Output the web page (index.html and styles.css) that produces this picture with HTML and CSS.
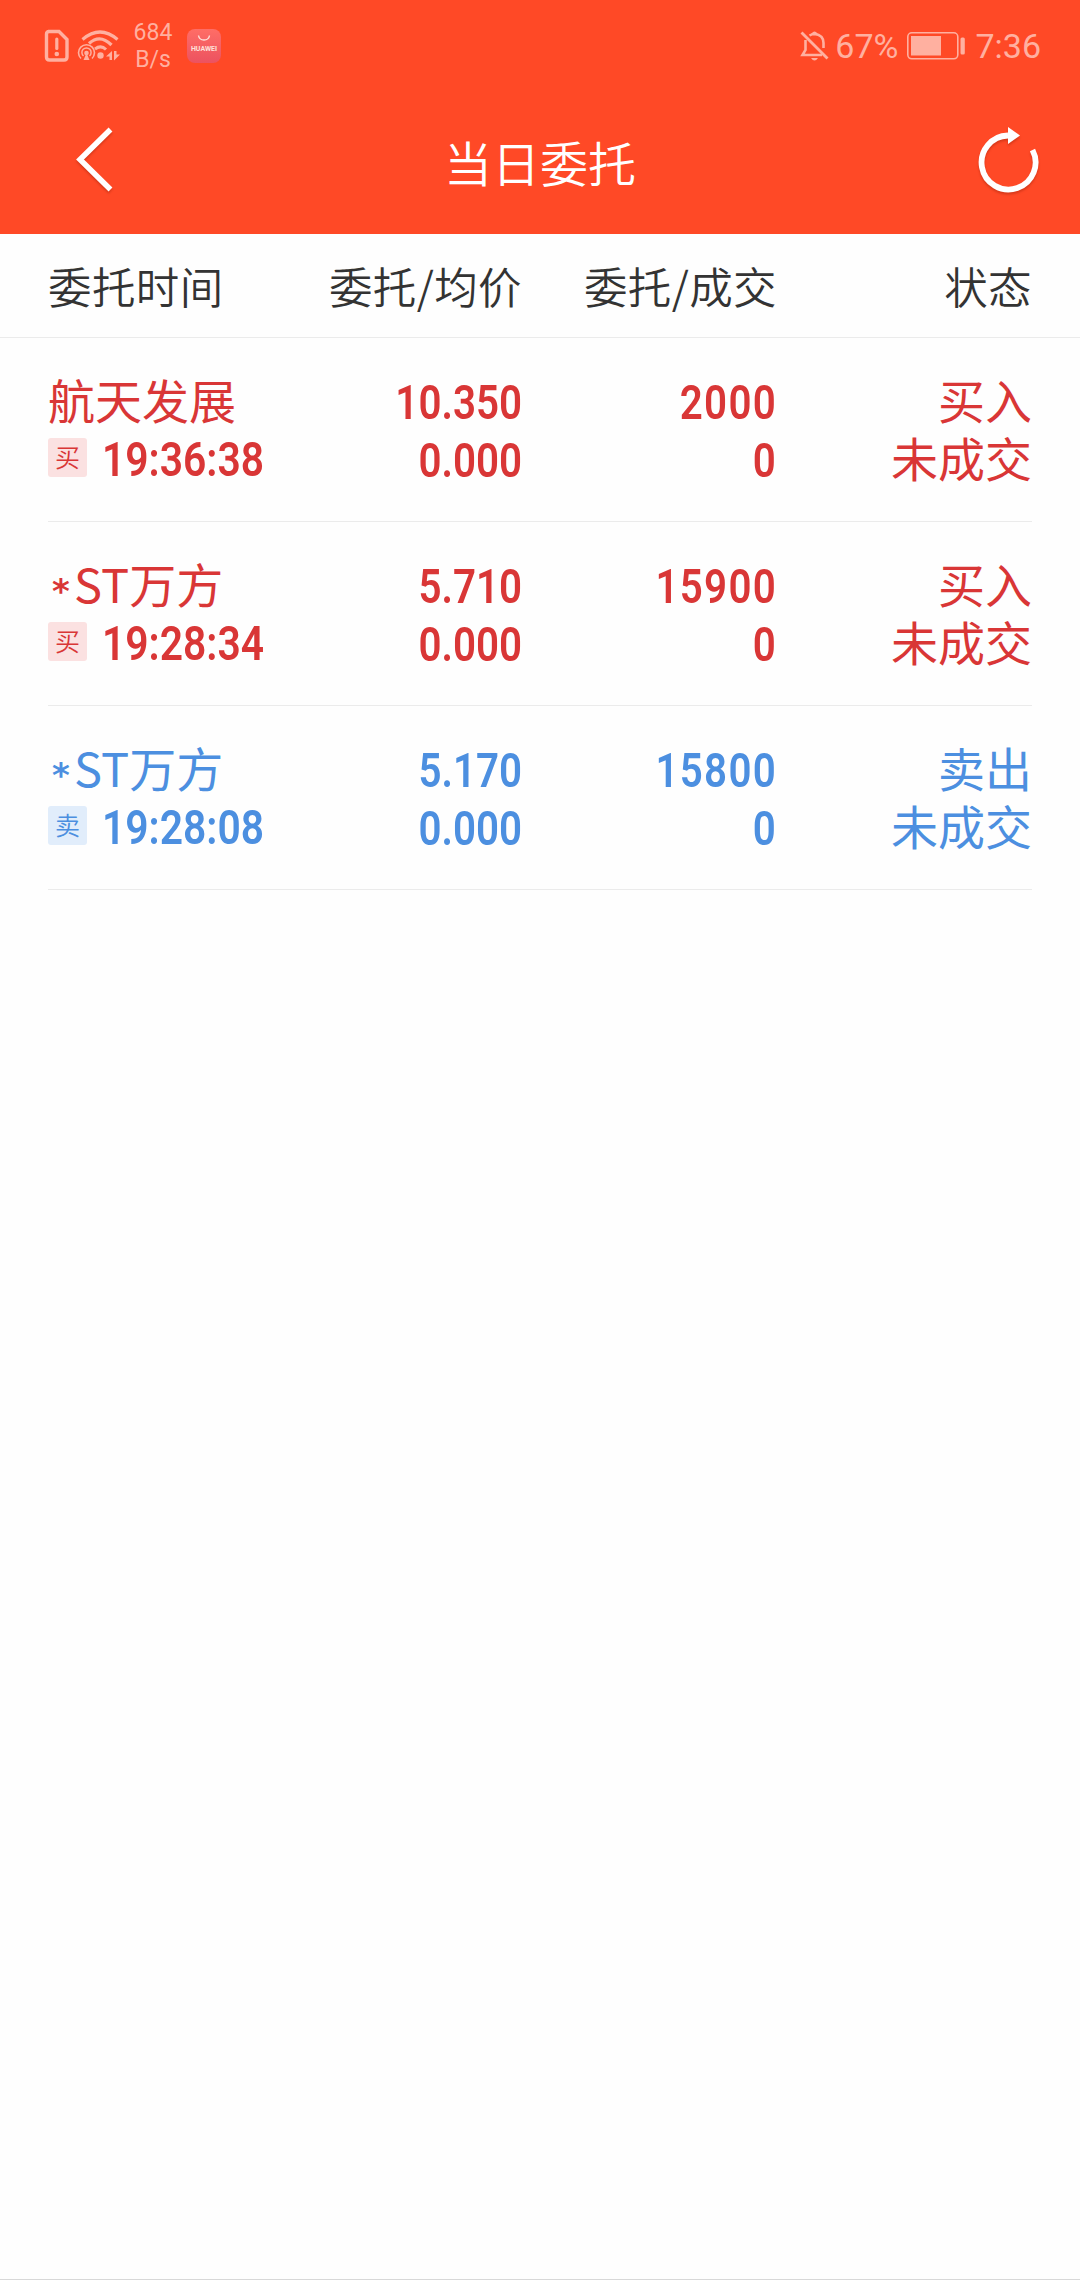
FILE: index.html
```
<!DOCTYPE html>
<html lang="zh-CN">
<head>
    <meta charset="UTF-8">
    <meta name="viewport" content="width=device-width, initial-scale=1.0">
    <title>当日委托</title>
    <link rel="stylesheet" href="styles.css">
</head>
<body>
    <header class="header">
        <div class="status-bar">
            <div class="status-left">
                <svg class="sim-icon" width="26" height="34" viewBox="0 0 26 34">
                    <path d="M4 2.5 H15 L23 10.5 V28 Q23 31 20 31 H5.500 Q2.500 31 2.500 28 V5 Q2.500 2.500 5 2.500 Z" fill="none" stroke="#ffb0a0" stroke-width="3.4"/>
                    <path d="M12.800 10 V19.500" stroke="#ffb0a0" stroke-width="3.200" stroke-linecap="round"/>
                    <circle cx="12.800" cy="25" r="2.300" fill="#ffb0a0"/>
                </svg>
                <svg class="wifi-icon" width="44" height="34" viewBox="0 0 44 34">
                    <g fill="none" stroke="#ffb0a0">
                        <path d="M5.500 10.500 Q23 -4.500 40.500 10.500" stroke-width="3.200"/>
                        <path d="M12 14.500 Q23 4.500 34.500 16" stroke-width="3.200"/>
                        <path d="M18 20 Q24 15.500 29 20.500" stroke-width="3"/>
                        <path d="M4 29.500 A8 8 0 1 1 15 29.500" stroke-width="1.600"/>
                        <path d="M6.500 27 A4.600 4.600 0 1 1 12.500 27" stroke-width="1.500"/>
                    </g>
                    <g fill="#ffb0a0">
                        <circle cx="9.500" cy="24" r="2.300"/>
                        <path d="M9.500 24 L12.500 31 H6.500 Z"/>
                        <circle cx="23.500" cy="26.500" r="3.200"/>
                        <path d="M29 27.500 L35 22 V31 H32.500 V27.500 Z"/>
                        <path d="M37 22 H39.500 V25.500 H43 L37 31.500 Z"/>
                    </g>
                </svg>
                <div class="speed">
                    <span>684</span>
                    <span>B/s</span>
                </div>
                <div class="app-icon">
                    <svg width="14" height="7" viewBox="0 0 14 7">
                        <path d="M1.500 0.500 C2.500 6.500 11.500 6.500 12.500 0.500" fill="none" stroke="#ffe0da" stroke-width="1.400"/>
                    </svg>
                    <span>HUAWEI</span>
                </div>
            </div>
            <div class="status-right">
                <svg class="bell-icon" width="29" height="32" viewBox="0 0 29 32">
                    <g fill="none" stroke="#ffb0a0" stroke-width="2.600">
                        <path d="M5.500 10 V20 L2.500 25 H22"/>
                        <path d="M9.500 5.500 Q12 4 14.500 4 Q23.500 5 23.500 13 V18"/>
                        <path d="M1.500 2.500 L27.500 28.500" stroke-width="2.800"/>
                    </g>
                    <path d="M11.500 5 V3.500 Q14.500 -0.500 17.500 3.500 V5 Z" fill="#ffb0a0"/>
                    <path d="M11 28 H18 Q14.500 33 11 28 Z" fill="#ffb0a0"/>
                </svg>
                <span class="percent">67%</span>
                <svg class="battery-icon" width="60" height="28" viewBox="0 0 60 28">
                    <rect x="0.800" y="0.800" width="50" height="26" rx="4" fill="none" stroke="#ffb0a0" stroke-width="1.600"/>
                    <rect x="4" y="4" width="30" height="19.500" fill="#ffb0a0"/>
                    <rect x="53.500" y="5.500" width="4.300" height="17" rx="1.500" fill="#ffb0a0"/>
                </svg>
                <span class="clock">7:36</span>
            </div>
        </div>
        <nav class="nav">
            <svg class="nav-icon" width="80" height="80" viewBox="0 0 80 80">
                <path d="M62.500 10.500 L32 40.500 L62.500 70.500" fill="none" stroke="#fff" stroke-width="5.500"/>
            </svg>
            <h1>当日委托</h1>
            <svg class="nav-icon" width="80" height="80" viewBox="0 0 80 80">
                <path d="M48 16.500 A27 27 0 1 0 72.500 31" fill="none" stroke="#fff" stroke-width="5.800"/>
                <path d="M48 8 L60 16.500 L48 25 Z" fill="#fff"/>
            </svg>
        </nav>
    </header>

    <div class="table-head">
        <span>委托时间</span>
        <span>委托/均价</span>
        <span>委托/成交</span>
        <span>状态</span>
    </div>

    <main class="orders">
        <div class="order buy">
            <div class="cell">
                <div class="name">航天发展</div>
                <div class="time"><i class="tag">买</i><span class="num">19:36:38</span></div>
            </div>
            <div class="cell">
                <div class="num">10.350</div>
                <div class="num">0.000</div>
            </div>
            <div class="cell amount">
                <div class="num">2000</div>
                <div class="num">0</div>
            </div>
            <div class="cell">
                <div>买入</div>
                <div>未成交</div>
            </div>
        </div>
        <div class="order buy">
            <div class="cell">
                <div class="name"><span class="star">*</span>ST万方</div>
                <div class="time"><i class="tag">买</i><span class="num">19:28:34</span></div>
            </div>
            <div class="cell">
                <div class="num">5.710</div>
                <div class="num">0.000</div>
            </div>
            <div class="cell amount">
                <div class="num">15900</div>
                <div class="num">0</div>
            </div>
            <div class="cell">
                <div>买入</div>
                <div>未成交</div>
            </div>
        </div>
        <div class="order sell">
            <div class="cell">
                <div class="name"><span class="star">*</span>ST万方</div>
                <div class="time"><i class="tag">卖</i><span class="num">19:28:08</span></div>
            </div>
            <div class="cell">
                <div class="num">5.170</div>
                <div class="num">0.000</div>
            </div>
            <div class="cell amount">
                <div class="num">15800</div>
                <div class="num">0</div>
            </div>
            <div class="cell">
                <div>卖出</div>
                <div>未成交</div>
            </div>
        </div>
    </main>
</body>
</html>
```
FILE: styles.css
```
* {
    box-sizing: border-box;
}
body {
    margin: 0;
    height: 2280px;
    background-color: #fefefe;
    border-bottom: 1px solid #d8d8d8;
    font-family: "Noto Sans CJK SC", sans-serif;
    color: #333;
}
.header {
    height: 234px;
    background-color: #ff4926;
    color: #fff;
}
.status-bar {
    height: 91px;
    display: flex;
    justify-content: space-between;
    padding: 0 39px 0 44px;
    font-family: Roboto, sans-serif;
    color: #ffb0a0;
}
.status-left, .status-right {
    display: flex;
    align-items: center;
}
.wifi-icon {
    margin-left: 7px;
}
.speed {
    width: 40px;
    margin-left: 12px;
    display: flex;
    flex-direction: column;
    align-items: center;
    font-size: 23px;
    line-height: 27px;
}
.app-icon {
    width: 34px;
    height: 34px;
    margin-left: 14px;
    padding-top: 6px;
    border-radius: 8px;
    background: linear-gradient(#ff6d66, #ec5260);
    display: flex;
    flex-direction: column;
    align-items: center;
    color: #ffe0da;
    font-size: 7px;
    font-weight: bold;
    line-height: 14px;
}
.status-right {
    font-size: 34px;
}
.percent {
    margin: 0 9px 0 6px;
}
.clock {
    margin-left: 8px;
}
.nav {
    height: 143px;
    display: flex;
    justify-content: space-between;
    padding: 28px 40px 0 48px;
}
.nav-icon {
    filter: drop-shadow(0 2px 1px rgba(120, 20, 0, 0.3));
}
.nav h1 {
    margin: 0 8px 0 0;
    font-size: 48px;
    font-weight: 350;
    line-height: 85px;
}
.table-head, .order {
    display: grid;
    grid-template-columns: 219px 255px 255px 255px;
    text-align: right;
    white-space: nowrap;
}
.table-head {
    height: 104px;
    padding: 0 48px;
    border-bottom: 1px solid #ebebeb;
    font-size: 43.500px;
    font-weight: 350;
    line-height: 104px;
    letter-spacing: 0.400px;
}
.orders {
    padding: 0 48px;
}
.order {
    height: 184px;
    padding-top: 32px;
    border-bottom: 1px solid #ebebeb;
    font-size: 47px;
    line-height: 57px;
}
.buy {
    color: #d93636;
}
.sell {
    color: #4c8fe0;
}
.table-head span:first-child, .cell:first-child {
    text-align: left;
}
.cell > div {
    height: 58px;
}
.num {
    font-family: Roboto, sans-serif;
    font-size: 48px;
    font-weight: 600;
    line-height: 65px;
    transform: scaleX(0.84);
    transform-origin: right;
}
.amount .num {
    letter-spacing: 1.500px;
}
.time {
    display: flex;
    align-items: center;
}
.time .num {
    margin-left: 15px;
    padding-top: 4px;
    transform: scaleX(0.85);
    transform-origin: left;
}
.tag {
    flex-shrink: 0;
    width: 39px;
    height: 39px;
    border-radius: 3px;
    font-size: 25px;
    font-style: normal;
    font-weight: 350;
    line-height: 37px;
    text-align: center;
}
.buy .tag {
    background-color: #fbe1e1;
}
.sell .tag {
    background-color: #e1edfb;
}
.star {
    display: inline-block;
    width: 26px;
    text-align: center;
    font-family: "DejaVu Sans", sans-serif;
    font-size: 34px;
    font-weight: bold;
    line-height: 40px;
}
```
